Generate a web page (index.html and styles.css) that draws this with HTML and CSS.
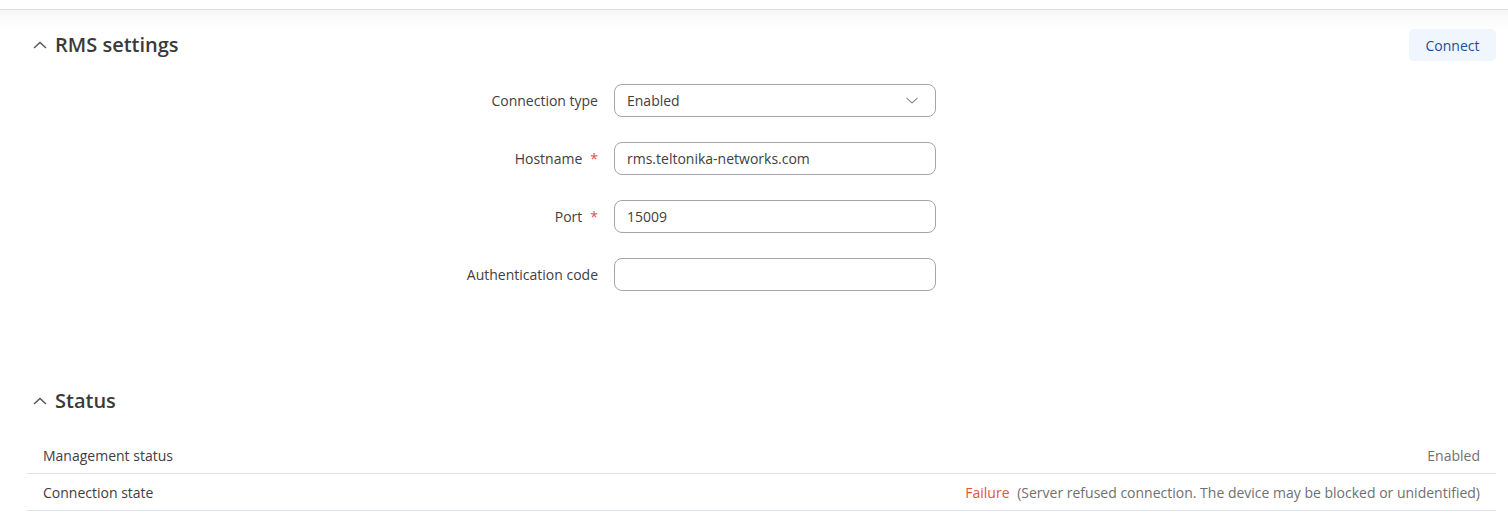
FILE: index.html
```html
<!DOCTYPE html>
<html>
<head>
<meta charset="utf-8">
<link rel="stylesheet" href="styles.css">
</head>
<body>
<div class="topbar"></div>
<main class="content">
  <section class="section first">
    <div class="section-head">
      <h2 class="title">
        <svg class="chev" width="14" height="8" viewBox="0 0 14 8"><path d="M1 7 L7 1.5 L13 7" fill="none" stroke="#555" stroke-width="1.4"/></svg>
        RMS settings
      </h2>
      <button class="btn-connect">Connect</button>
    </div>
    <div class="form">
      <div class="row">
        <label class="label">Connection type</label>
        <div class="field select">
          <span>Enabled</span>
          <svg width="12" height="7" viewBox="0 0 12 7"><path d="M0.5 0.8 L6 6 L11.5 0.8" fill="none" stroke="#8a8a8a" stroke-width="1.1"/></svg>
        </div>
      </div>
      <div class="row">
        <label class="label">Hostname<span class="req">*</span></label>
        <div class="field"><span>rms.teltonika-networks.com</span></div>
      </div>
      <div class="row">
        <label class="label">Port<span class="req">*</span></label>
        <div class="field"><span>15009</span></div>
      </div>
      <div class="row">
        <label class="label">Authentication code</label>
        <div class="field"></div>
      </div>
    </div>
  </section>
  <section class="section status">
    <div class="section-head">
      <h2 class="title">
        <svg class="chev" width="14" height="8" viewBox="0 0 14 8"><path d="M1 7 L7 1.5 L13 7" fill="none" stroke="#555" stroke-width="1.4"/></svg>
        Status
      </h2>
    </div>
    <div class="table">
      <div class="trow">
        <span>Management status</span>
        <span class="val">Enabled</span>
      </div>
      <div class="trow">
        <span>Connection state</span>
        <span class="val"><span class="fail">Failure</span> (Server refused connection. The device may be blocked or unidentified)</span>
      </div>
    </div>
  </section>
</main>
</body>
</html>
```
FILE: styles.css
```css
* { box-sizing: border-box; }
html, body { margin: 0; padding: 0; background: #fff; }
body {
  font-family: "Open Sans", "Noto Sans", sans-serif;
  color: #404040;
  font-size: 14px;
  width: 1508px;
  height: 514px;
  overflow: hidden;
}
.topbar {
  height: 30px;
  border-top: 9px solid #fff;
  background: linear-gradient(#f6f6f6, #fff);
  box-shadow: inset 0 1px 0 #dcdcdc;
  margin-bottom: -10px;
}
.content {
  padding: 0 12px 0 27px;
}
.first { margin-top: 9px; }
.section-head {
  display: flex;
  align-items: center;
  justify-content: space-between;
  height: 32px;
}
.title {
  margin: 0;
  display: flex;
  align-items: center;
  gap: 8px;
  font-size: 20px;
  font-weight: 600;
  color: #3a3a3a;
  padding-left: 6px;
  line-height: 28px;
}
.chev { margin-top: -1px; }
.btn-connect {
  border: 0;
  background: #eff6fe;
  color: #1e4c9a;
  font-family: inherit;
  font-size: 14px;
  font-weight: 500;
  height: 32px;
  width: 87px;
  border-radius: 5px;
  padding: 0;
}
.form {
  display: flex;
  flex-direction: column;
  gap: 25px;
  margin-top: 23px;
}
.row {
  display: grid;
  grid-template-columns: 571px 322px;
  column-gap: 16px;
  align-items: center;
}
.label {
  text-align: right;
  color: #404040;
  font-size: 14px;
  display: flex;
  justify-content: flex-end;
  gap: 8px;
}
.req { color: #d9534f; }
.field {
  height: 33px;
  border: 1px solid #a5a5ad;
  border-radius: 8px;
  display: flex;
  align-items: center;
  justify-content: space-between;
  padding: 0 17px 0 12px;
  color: #404040;
  font-size: 14px;
}
.status { margin-top: 96px; }
.status .section-head { height: 28px; }
.table { margin-top: 22px; }
.trow {
  display: flex;
  justify-content: space-between;
  align-items: center;
  height: 37px;
  padding: 0 16px;
  border-bottom: 1px solid #dfe3ea;
  font-size: 14px;
  color: #404040;
}
.val { color: #707070; }
.fail { color: #e2533f; margin-right: 4px; }
```
